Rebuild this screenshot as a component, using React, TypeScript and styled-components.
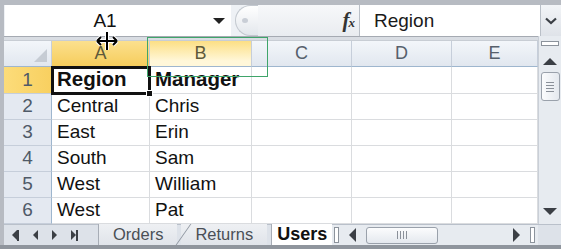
import { Fragment } from 'react';
import styled, { createGlobalStyle } from 'styled-components';

const GlobalStyle = createGlobalStyle`
  body {
    margin: 0;
    background: #fff;
  }
`;

const Frame = styled.div`
  position: relative;
  width: 561px;
  height: 249px;
  overflow: hidden;
  background: #b7bbc2;
  font-family: 'Liberation Sans', Arial, sans-serif;
  display: flex;
  flex-direction: column;
  padding-left: 4px;
  box-sizing: border-box;
`;

const FormulaBar = styled.div`
  margin-top: 5px;
  height: 31px;
  display: flex;
  background: #eef1f5;
`;

const NameBox = styled.div`
  position: relative;
  width: 226px;
  margin-left: 1px;
  background: #fff;
  display: flex;
  align-items: center;
  justify-content: center;
  font-size: 19px;
  color: #111;
  padding-right: 26px;
  box-sizing: border-box;
`;

const DropArrow = styled.span`
  position: absolute;
  right: 6px;
  top: 13px;
  width: 0;
  height: 0;
  border-left: 6px solid transparent;
  border-right: 6px solid transparent;
  border-top: 6px solid #222;
`;

const Knob = styled.div`
  width: 22px;
  margin-left: 4px;
  border-radius: 16px 0 0 16px;
  border: 1px solid #c3c8cf;
  border-right: none;
  background: linear-gradient(to bottom, #ffffff, #e3e7ec);
  position: relative;
  &::after {
    content: '';
    position: absolute;
    left: 6px;
    top: 12px;
    width: 6px;
    height: 5px;
    border-radius: 50%;
    background: #c9ced6;
  }
`;

const FxArea = styled.div`
  flex: 1;
  display: flex;
  align-items: center;
  justify-content: flex-end;
  padding-right: 5px;
  background: linear-gradient(to bottom, #f7f8fa, #e9ecf0);
`;

const Fx = styled.span`
  font-family: 'Liberation Serif', serif;
  font-style: italic;
  font-weight: bold;
  font-size: 21px;
  color: #333;
  letter-spacing: -1px;
  & small {
    font-size: 13px;
  }
`;

const FormulaInput = styled.div`
  width: 181px;
  background: #fff;
  border-left: 1px solid #b9bfc7;
  display: flex;
  align-items: center;
  padding-left: 14px;
  box-sizing: border-box;
  font-size: 19px;
  color: #1a1a1a;
`;

const ExpandButton = styled.div`
  width: 20px;
  display: flex;
  align-items: center;
  justify-content: center;
  background: linear-gradient(to bottom, #f2f4f7, #dfe3e9);
  border-left: 1px solid #b9bfc7;
`;

const BarGap = styled.div`
  height: 5px;
  background: #d9dde3;
  border-top: 1px solid #a5aab2;
  border-bottom: 1px solid #c8cdd4;
  box-sizing: border-box;
  margin-right: 23px;
`;

const Main = styled.div`
  display: flex;
  background: #fff;
`;

const Grid = styled.div`
  display: grid;
  grid-template-columns: 48px 98px 102px 100px 100px 86px;
  grid-template-rows: 26px 27px repeat(5, 26px);
`;

const ColHead = styled.div<{ $state?: 'sel' | 'hover' }>`
  display: flex;
  align-items: center;
  justify-content: center;
  font-size: 18px;
  color: ${(p) => (p.$state ? '#5f5a3a' : '#56606c')};
  border-right: 1px solid #c6ceda;
  border-bottom: 1px solid #9eb6ce;
  background: ${(p) =>
    p.$state === 'sel'
      ? 'linear-gradient(to bottom, #fbe08e, #f6cd5c)'
      : p.$state === 'hover'
      ? 'linear-gradient(to bottom, #fcdf84, #fff7d9 80%)'
      : 'linear-gradient(to bottom, #f3f6fa, #e1e7ef)'};
`;

const Corner = styled(ColHead)`
  position: relative;
  &::after {
    content: '';
    position: absolute;
    right: 4px;
    bottom: 4px;
    width: 0;
    height: 0;
    border-left: 13px solid transparent;
    border-bottom: 13px solid #c6ccd4;
  }
`;

const RowHead = styled.div<{ $sel?: boolean }>`
  display: flex;
  align-items: flex-end;
  justify-content: center;
  padding-bottom: 2px;
  box-sizing: border-box;
  font-size: 19px;
  color: #4f5a68;
  border-right: 1px solid #9eb6ce;
  border-bottom: 1px solid #c6ceda;
  background: ${(p) =>
    p.$sel ? 'linear-gradient(to right, #fcdc7a, #f8d060)' : '#e4e9f1'};
`;

const Cell = styled.div<{ $bold?: boolean; $active?: boolean }>`
  position: relative;
  display: flex;
  align-items: flex-end;
  padding: 0 0 2px 5px;
  box-sizing: border-box;
  font-size: ${(p) => (p.$bold ? '20.5px' : '19px')};
  font-weight: ${(p) => (p.$bold ? 'bold' : 'normal')};
  color: #111;
  border-right: 1px solid #dadcdf;
  border-bottom: 1px solid #dadcdf;
  white-space: nowrap;
  ${(p) =>
    p.$active &&
    `
    outline: 3px solid #111;
    outline-offset: -2px;
    z-index: 2;
    &::after {
      content: '';
      position: absolute;
      right: -4px;
      bottom: -4px;
      width: 5px;
      height: 5px;
      background: #111;
      border: 1px solid #fff;
    }
  `}
`;

const VScroll = styled.div`
  width: 23px;
  background: #e7ebf0;
  border-left: 1px solid #c9cfd7;
  box-sizing: border-box;
  display: flex;
  flex-direction: column;
  align-items: center;
  position: relative;
  margin-top: -5px;
`;

const Splitter = styled.div<{ $vertical?: boolean }>`
  background: #fff;
  border: 1px solid #8c939c;
  box-sizing: border-box;
  width: ${(p) => (p.$vertical ? '5px' : '18px')};
  height: ${(p) => (p.$vertical ? '16px' : '5px')};
  flex-shrink: 0;
`;

const Arrow = styled.span<{ $dir: 'up' | 'down' | 'left' | 'right'; $size?: number }>`
  width: 0;
  height: 0;
  flex-shrink: 0;
  ${(p) => {
    const s = p.$size ?? 6;
    const c = '#3b3f45';
    switch (p.$dir) {
      case 'up':
        return `border-left:${s}px solid transparent;border-right:${s}px solid transparent;border-bottom:${s}px solid ${c};`;
      case 'down':
        return `border-left:${s}px solid transparent;border-right:${s}px solid transparent;border-top:${s}px solid ${c};`;
      case 'left':
        return `border-top:${s}px solid transparent;border-bottom:${s}px solid transparent;border-right:${s}px solid ${c};`;
      default:
        return `border-top:${s}px solid transparent;border-bottom:${s}px solid transparent;border-left:${s}px solid ${c};`;
    }
  }}
`;

const VThumb = styled.div`
  width: 19px;
  height: 29px;
  border: 1px solid #9aa1ab;
  border-radius: 3px;
  background: linear-gradient(to right, #fbfcfd, #e4e8ee);
  box-sizing: border-box;
  display: flex;
  flex-direction: column;
  align-items: center;
  justify-content: center;
  gap: 2px;
  & span {
    width: 8px;
    height: 1px;
    background: #8a9099;
  }
`;

const TabBar = styled.div`
  height: 21px;
  display: flex;
  align-items: stretch;
  background: #dde2e9;
  border-top: 1px solid #b9c0ca;
  box-sizing: border-box;
`;

const NavArrows = styled.div`
  width: 94px;
  display: flex;
  align-items: center;
  gap: 14px;
  padding-left: 8px;
  box-sizing: border-box;
`;

const NavEnd = styled.span<{ $right?: boolean }>`
  display: flex;
  align-items: center;
  flex-direction: ${(p) => (p.$right ? 'row' : 'row-reverse')};
  &::before {
    content: '';
    width: 2px;
    height: 11px;
    background: #3b3f45;
    order: ${(p) => (p.$right ? 2 : 0)};
  }
`;

const Tab = styled.div<{ $active?: boolean; $slant?: boolean }>`
  position: relative;
  display: flex;
  align-items: center;
  justify-content: center;
  padding: 0 ${(p) => (p.$active ? '5px' : '14px')};
  font-size: ${(p) => (p.$active ? '18px' : '16.5px')};
  font-weight: ${(p) => (p.$active ? 'bold' : 'normal')};
  color: ${(p) => (p.$active ? '#111' : '#4a4f56')};
  background: ${(p) => (p.$active ? '#fff' : 'linear-gradient(to bottom, #eef0f3, #e0e4ea)')};
  border-left: ${(p) => (p.$slant ? 'none' : '1px solid #a7adb6')};
  margin-top: -1px;
  margin-left: ${(p) => (p.$active ? '4px' : '0')};
  white-space: nowrap;
  ${(p) =>
    p.$slant &&
    `
    margin-left: 4px;
    &::before {
      content: '';
      position: absolute;
      left: 2px;
      top: 0;
      bottom: 0;
      width: 1px;
      background: #8e959f;
      transform: skewX(-35deg);
    }
  `}
`;

const HScroll = styled.div`
  flex: 1;
  display: flex;
  align-items: center;
  padding: 0 3px 0 2px;
  gap: 10px;
  background: #e7ebf0;
`;

const HThumb = styled.div`
  width: 72px;
  height: 17px;
  border: 1px solid #9aa1ab;
  border-radius: 3px;
  background: linear-gradient(to bottom, #fbfcfd, #e4e8ee);
  box-sizing: border-box;
  display: flex;
  align-items: center;
  justify-content: center;
  gap: 2px;
  & span {
    width: 1px;
    height: 8px;
    background: #8a9099;
  }
`;

const Corner2 = styled.div`
  width: 23px;
  background: #dde2e9;
`;

const BottomBar = styled.div`
  flex: 1;
  background: #8f959d;
  margin-left: -4px;
`;

const SelectionBox = styled.div`
  position: absolute;
  left: 147px;
  top: 37px;
  width: 119px;
  height: 38px;
  border: 1px solid #3fa56a;
  pointer-events: none;
  z-index: 5;
`;

const Cursor = styled.svg`
  position: absolute;
  left: 95px;
  top: 31px;
  z-index: 6;
`;

const Space = styled.div<{ $h?: number }>`
  height: ${(p) => (p.$h ? `${p.$h}px` : 'auto')};
  flex: ${(p) => (p.$h ? 'none' : '1')};
`;

const rows: [string, string][] = [
  ['Region', 'Manager'],
  ['Central', 'Chris'],
  ['East', 'Erin'],
  ['South', 'Sam'],
  ['West', 'William'],
  ['West', 'Pat'],
];

const cursorPath = 'M12 1 V19 M2 10 H22 M2 10 L6 6 M2 10 L6 14 M22 10 L18 6 M22 10 L18 14';

const App = () => {
  return (
    <>
      <GlobalStyle />
      <Frame>
        <FormulaBar>
          <NameBox>
            A1
            <DropArrow />
          </NameBox>
          <Knob />
          <FxArea>
            <Fx>
              f<small>x</small>
            </Fx>
          </FxArea>
          <FormulaInput>Region</FormulaInput>
          <ExpandButton>
            <svg width="12" height="8" viewBox="0 0 12 8">
              <path d="M1 1.5 L6 6 L11 1.5" stroke="#3b3f45" strokeWidth="2.2" fill="none" />
            </svg>
          </ExpandButton>
        </FormulaBar>
        <BarGap />
        <Main>
          <Grid>
            <Corner />
            <ColHead $state="sel">A</ColHead>
            <ColHead $state="hover">B</ColHead>
            <ColHead>C</ColHead>
            <ColHead>D</ColHead>
            <ColHead>E</ColHead>
            {rows.map(([a, b], i) => (
              <Fragment key={i}>
                <RowHead $sel={i === 0}>{i + 1}</RowHead>
                <Cell $bold={i === 0} $active={i === 0}>
                  {a}
                </Cell>
                <Cell $bold={i === 0}>{b}</Cell>
                <Cell />
                <Cell />
                <Cell />
              </Fragment>
            ))}
          </Grid>
          <VScroll>
            <Space $h={5} />
            <Splitter />
            <Space $h={12} />
            <Arrow $dir="up" $size={7} />
            <Space $h={7} />
            <VThumb>
              <span />
              <span />
              <span />
              <span />
            </VThumb>
            <Space />
            <Arrow $dir="down" $size={7} />
            <Space $h={9} />
          </VScroll>
        </Main>
        <TabBar>
          <NavArrows>
            <NavEnd>
              <Arrow $dir="left" $size={5} />
            </NavEnd>
            <Arrow $dir="left" $size={5} />
            <Arrow $dir="right" $size={5} />
            <NavEnd $right>
              <Arrow $dir="right" $size={5} />
            </NavEnd>
          </NavArrows>
          <Tab>Orders</Tab>
          <Tab $slant>Returns</Tab>
          <Tab $active>Users</Tab>
          <HScroll>
            <Splitter $vertical />
            <Arrow $dir="left" $size={7} />
            <HThumb>
              <span />
              <span />
              <span />
              <span />
            </HThumb>
            <Space />
            <Arrow $dir="right" $size={7} />
            <Splitter $vertical />
          </HScroll>
          <Corner2 />
        </TabBar>
        <BottomBar />
        <SelectionBox />
        <Cursor width="24" height="20" viewBox="0 0 24 20">
          <path d={cursorPath} stroke="#fff" strokeWidth="4" fill="none" />
          <path d={cursorPath} stroke="#000" strokeWidth="2" fill="none" />
        </Cursor>
      </Frame>
    </>
  );
};

export default App;
